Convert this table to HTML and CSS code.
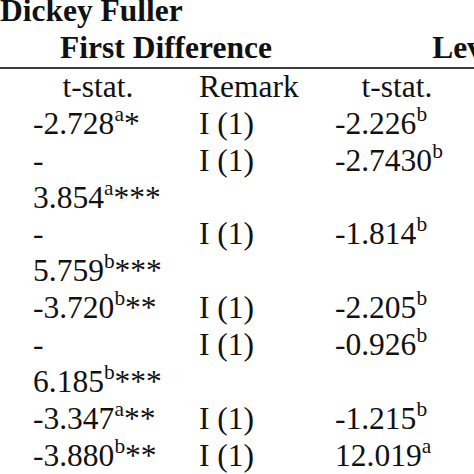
FILE: index.html
```html
<!DOCTYPE html>
<html lang="en">
<head>
<meta charset="utf-8">
<title>Dickey Fuller</title>
<link rel="stylesheet" href="styles.css">
</head>
<body>
<div class="table">
  <div class="title">Dickey Fuller</div>
  <div class="grid groups">
    <div class="group first">First Difference</div>
    <div class="group levels">Levels</div>
  </div>
  <div class="rule"></div>
  <div class="grid rows">
    <div class="head">t-stat.</div>
    <div class="cell">Remark</div>
    <div class="head">t-stat.</div>
    <div class="cell"></div>

    <div class="cell">-2.728<sup>a</sup>*</div>
    <div class="cell">I (1)</div>
    <div class="cell">-2.226<sup>b</sup></div>
    <div class="cell"></div>

    <div class="cell">- 3.854<sup>a</sup>***</div>
    <div class="cell">I (1)</div>
    <div class="cell">-2.7430<sup>b</sup></div>
    <div class="cell"></div>

    <div class="cell">- 5.759<sup>b</sup>***</div>
    <div class="cell">I (1)</div>
    <div class="cell">-1.814<sup>b</sup></div>
    <div class="cell"></div>

    <div class="cell">-3.720<sup>b</sup>**</div>
    <div class="cell">I (1)</div>
    <div class="cell">-2.205<sup>b</sup></div>
    <div class="cell"></div>

    <div class="cell">- 6.185<sup>b</sup>***</div>
    <div class="cell">I (1)</div>
    <div class="cell">-0.926<sup>b</sup></div>
    <div class="cell"></div>

    <div class="cell">-3.347<sup>a</sup>**</div>
    <div class="cell">I (1)</div>
    <div class="cell">-1.215<sup>b</sup></div>
    <div class="cell"></div>

    <div class="cell">-3.880<sup>b</sup>**</div>
    <div class="cell">I (1)</div>
    <div class="cell">12.019<sup>a</sup></div>
    <div class="cell"></div>
  </div>
</div>
</body>
</html>
```

FILE: styles.css
```css
html, body {
  margin: 0;
  padding: 0;
  background: #ffffff;
  overflow: hidden;
}

body {
  width: 474px;
  height: 474px;
  font-family: "Liberation Serif", "Times New Roman", serif;
  font-size: 31.5px;
  line-height: 36.9px;
  color: #111111;
}

.table {
  margin-top: -7px;
  width: 640px;
}

.title {
  font-weight: bold;
  white-space: nowrap;
}

.grid {
  display: grid;
  grid-template-columns: 130px 100px 124px 120px;
  column-gap: 36px;
  padding-left: 33px;
}

.group {
  font-weight: bold;
  text-align: center;
  white-space: nowrap;
}

.group.first {
  grid-column: 1 / 3;
}

.group.levels {
  grid-column: 3 / 5;
}

.rule {
  height: 2px;
  background: #3d3d3d;
}

.head {
  text-align: center;
}

.cell {
  text-align: left;
}

sup {
  font-size: 0.68em;
  line-height: 0;
  vertical-align: 0.6em;
}
```
